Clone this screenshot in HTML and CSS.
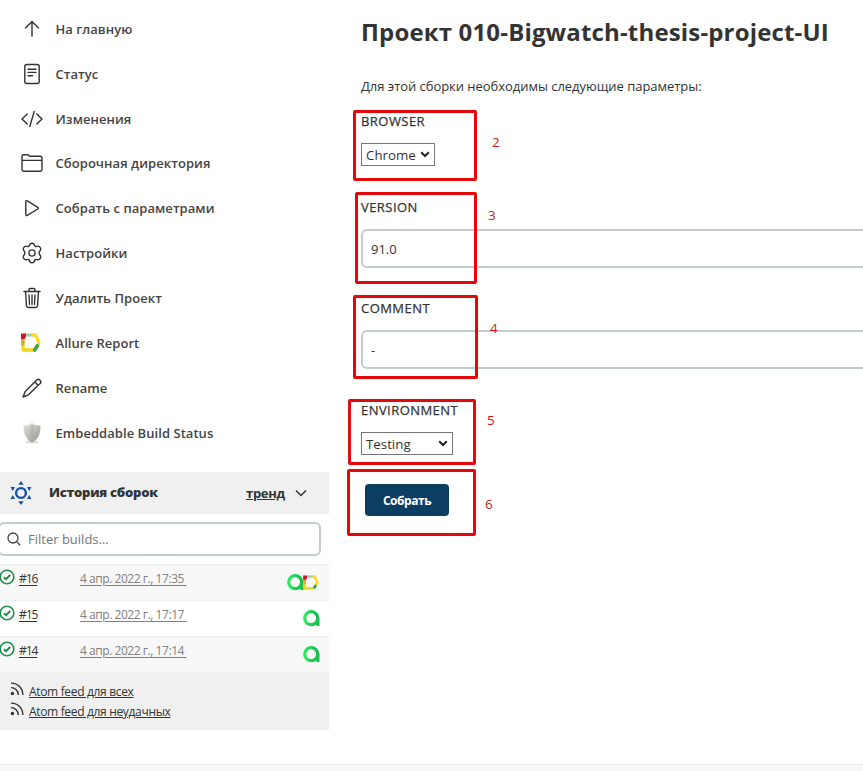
FILE: index.html
```html
<!DOCTYPE html>
<html lang="ru">
<head>
<meta charset="utf-8">
<title>010-Bigwatch-thesis-project-UI</title>
<link rel="stylesheet" href="styles.css">
</head>
<body>
<svg class="defs" width="0" height="0" aria-hidden="true">
  <defs>
    <linearGradient id="green" x1="0" y1="0" x2="1" y2="0"><stop offset="0" stop-color="#2fe860"/><stop offset="1" stop-color="#14b84a"/></linearGradient>
    <linearGradient id="silver" x1="0" y1="0" x2="1" y2="1"><stop offset="0" stop-color="#e4e4e0"/><stop offset="1" stop-color="#92928e"/></linearGradient>
    <symbol id="allure" viewBox="0 0 20 19">
      <path d="M2 5v12h11" fill="none" stroke="#f0d71c" stroke-width="3.400"/>
      <path d="M1.800 6v5" stroke="#d9a52c" stroke-width="3.200"/>
      <path d="M5 2h8" stroke="#a4cda4" stroke-width="2.800"/>
      <path d="M12 2H14.500l3.500 7.500-1.800 3.500" fill="none" stroke="#ffd91f" stroke-width="3.200"/>
      <path d="M16.300 12.800L13.700 17" stroke="#3ca64a" stroke-width="3.600"/>
      <path d="M0 .5h5v3L3.800 6H0z" fill="#d0142c"/>
    </symbol>
    <symbol id="testops" viewBox="0 0 17 17">
      <circle cx="8.200" cy="8.200" r="6.500" fill="none" stroke="url(#green)" stroke-width="3.200"/>
      <path d="M13.200 8H16.500V16H13.700L12.300 13z" fill="#19c44d"/>
    </symbol>
    <symbol id="ok" viewBox="0 0 16 16">
      <circle cx="8" cy="8" r="6.800" fill="#fff" stroke="#1e9048" stroke-width="1.600"/>
      <path d="M4.900 8.200l2.200 2 4-4.200" fill="none" stroke="#1e8a42" stroke-width="1.900"/>
    </symbol>
    <symbol id="feed" viewBox="0 0 14 14">
      <circle cx="2.400" cy="11.500" r="1.700" fill="#333"/>
      <path d="M1 5.600a7.200 7.200 0 0 1 7.300 7.400M1 1.100C8 1 12.800 6 12.900 13" fill="none" stroke="#333" stroke-width="1.400"/>
    </symbol>
    <symbol id="chev" viewBox="0 0 10 7"><path d="M1.200 1.300L5 5l3.800-3.700" fill="none" stroke="#222" stroke-width="2"/></symbol>
  </defs>
</svg>
<div class="page">
  <aside class="side">
    <nav class="tasks">
      <a class="task"><svg class="icon" viewBox="0 0 24 24"><path d="M12 19V4.500M5.500 11L12 4.500l6.500 6.500"/></svg><span>На главную</span></a>
      <a class="task"><svg class="icon" viewBox="0 0 24 24"><rect x="4.800" y="2.500" width="14.400" height="19" rx="2"/><path d="M8 7.200h8M8 10.400h8M8 13.700h4.500"/></svg><span>Статус</span></a>
      <a class="task"><svg class="icon" viewBox="0 0 24 24"><path d="M7.200 7L2 12l5.200 5M16.800 7L22 12l-5.200 5M14.200 4.500l-4.400 15"/></svg><span>Изменения</span></a>
      <a class="task"><svg class="icon" viewBox="0 0 24 24"><path d="M2 18.500V5.200Q2 3.800 3.500 3.800H8L10.200 5.300H20.300Q22 5.300 22 7v11.500q0 1.700-1.700 1.700H3.700Q2 20.200 2 18.500zM2 9.400h20"/></svg><span>Сборочная директория</span></a>
      <a class="task"><svg class="icon" viewBox="0 0 24 24"><path d="M5.800 5.800v12.700q0 1.700 1.500.9L17.800 13q1.200-.9 0-1.700L7.300 4.900q-1.500-.8-1.500.9z"/></svg><span>Собрать с параметрами</span></a>
      <a class="task"><svg class="icon" viewBox="0 0 24 24"><circle cx="12" cy="12" r="3.100"/><path d="M9.300 4.700C9.900 1.500 14.100 1.500 14.700 4.700Q15.300 5.900 16.800 5.400C19.900 4.300 22 7.900 19.700 10.200Q18.500 12 19.700 13.800C22 16.100 19.900 19.700 16.800 18.600Q15.300 18.100 14.700 19.300C14.100 22.500 9.900 22.500 9.300 19.300Q8.700 18.100 7.200 18.600C4.100 19.700 2 16.100 4.300 13.800Q5.500 12 4.300 10.200C2 7.900 4.100 4.300 7.200 5.400Q8.700 5.900 9.300 4.700z"/></svg><span>Настройки</span></a>
      <a class="task"><svg class="icon" viewBox="0 0 24 24"><path d="M4 5.500h16M5.500 5.500l1 14.200q.1 1.800 1.800 1.800h7.400q1.700 0 1.800-1.800l1-14.200M9 5V3.600Q9 2.500 10.200 2.500h3.600q1.200 0 1.200 1.100V5M9 9l.5 9.200M12 9v9.200M15 9l-.5 9.200"/></svg><span>Удалить Проект</span></a>
      <a class="task"><svg class="icon logo"><use href="#allure"/></svg><span>Allure Report</span></a>
      <a class="task"><svg class="icon" viewBox="0 0 24 24"><path d="M14.700 6.100L5.200 15.500 3 21l5.500-2.200 9.600-9.500M14.700 6.100l2-2.100q1.700-1.400 3.300.2 1.700 1.600.2 3.300l-2.100 1.800z"/></svg><span>Rename</span></a>
      <a class="task"><svg class="icon shield" viewBox="0 0 24 24"><ellipse cx="12" cy="21" rx="7" ry="1.500"/><path d="M3.500 4.500Q9 5 12 2q3 3 8.500 2.500.8 12-8.500 17.200Q2.700 16.500 3.500 4.500z"/><path class="seam" d="M12 5v11"/></svg><span>Embeddable Build Status</span></a>
    </nav>
    <section class="history">
      <header class="history-head">
        <svg class="sun" viewBox="0 0 22 24"><circle cx="11" cy="12" r="4.900"/><path d="M11 0l2.700 3.700H8.300zM11 24l2.700-3.700H8.300zM.6 5.800l4.600.5L2.500 10zM.6 18.200l4.600-.5L2.500 14zM21.400 5.800l-4.600.5L19.500 10zM21.400 18.200l-4.600-.5 2.700-3.700z"/></svg>
        <strong class="history-title">История сборок</strong>
        <a class="trend">тренд</a>
        <svg class="toggle" viewBox="0 0 12 8"><path d="M1 1.500l5 5 5-5"/></svg>
      </header>
      <label class="filter">
        <svg viewBox="0 0 14 14"><circle cx="6" cy="6" r="5"/><path d="M9.700 9.700l3.500 3.500"/></svg>
        <input placeholder="Filter builds...">
      </label>
      <div class="build odd"><svg class="ok"><use href="#ok"/></svg><a class="num">#16</a><a class="date">4 апр. 2022 г., 17:35&nbsp;</a><span class="badges"><svg class="ops"><use href="#testops"/></svg><svg class="mini"><use href="#allure"/></svg></span></div>
      <div class="build"><svg class="ok"><use href="#ok"/></svg><a class="num">#15</a><a class="date">4 апр. 2022 г., 17:17&nbsp;</a><span class="badges"><svg class="ops"><use href="#testops"/></svg></span></div>
      <div class="build odd"><svg class="ok"><use href="#ok"/></svg><a class="num">#14</a><a class="date">4 апр. 2022 г., 17:14&nbsp;</a><span class="badges"><svg class="ops"><use href="#testops"/></svg></span></div>
      <footer class="feeds">
        <div class="feed"><svg><use href="#feed"/></svg><a>Atom feed для всех</a></div>
        <div class="feed"><svg><use href="#feed"/></svg><a>Atom feed для неудачных</a></div>
      </footer>
    </section>
  </aside>
  <main class="main">
    <h1>Проект 010-Bigwatch-thesis-project-UI</h1>
    <p class="intro">Для этой сборки необходимы следующие параметры:</p>
    <form>
      <div class="field browser"><label>BROWSER</label><div class="pick"><select><option>Chrome</option></select><svg><use href="#chev"/></svg></div></div>
      <div class="field version"><label>VERSION</label><input value="91.0"></div>
      <div class="field comment"><label>COMMENT</label><input value="-"></div>
      <div class="field environment"><label>ENVIRONMENT</label><div class="pick"><select><option>Testing</option></select><svg><use href="#chev"/></svg></div></div>
      <button type="button">Собрать</button>
    </form>
  </main>
</div>
<div class="bottom"></div>
<div class="mark m2"><span>2</span></div>
<div class="mark m3"><span>3</span></div>
<div class="mark m4"><span>4</span></div>
<div class="mark m5"><span>5</span></div>
<div class="mark m6"><span>6</span></div>
</body>
</html>
```
FILE: styles.css
```css
* { box-sizing: border-box; }
body { margin: 0; height: 771px; overflow: hidden; position: relative; background: #fff; color: #333; font: 13px/20px "Open Sans", "Noto Sans", sans-serif; }
.defs { position: absolute; }
svg { display: block; flex: none; }
.page { display: flex; height: 764px; }
.side { width: 329px; flex: none; }
.tasks { padding-top: 6.500px; height: 472px; }
.task { display: flex; align-items: center; height: 44.85px; padding-left: 20px; gap: 11.500px; font-weight: 600; font-size: 13px; letter-spacing: .05px; color: #444; }
.icon { width: 24px; height: 24px; fill: none; stroke: #333; stroke-width: 1.400; stroke-linecap: round; stroke-linejoin: round; }
.logo { width: 20px; height: 19px; stroke: none; }
.task .logo { margin: 0 3px 0 1px; }
.shield { stroke: none; fill: url(#silver); }
.shield ellipse { fill: #ddd; }
.shield .seam { stroke: #aaa; stroke-width: 1; }
.history-head { display: flex; align-items: center; height: 42px; background: #f0f0f0; padding-left: 10px; font-weight: 700; }
.sun { width: 22px; height: 24px; fill: #1350a8; }
.sun circle { fill: none; stroke: #1350a8; stroke-width: 2.400; }
.history-title { margin: -2px 0 0 17px; width: 197px; font-size: 13px; letter-spacing: -.25px; }
.trend { width: 40px; text-decoration: underline; letter-spacing: -.3px; }
.toggle { width: 12px; height: 8px; margin-left: 9px; fill: none; stroke: #333; stroke-width: 1.500; }
.filter { display: flex; align-items: center; width: 323px; height: 34px; margin: 8px 0 8px -2px; border: 2px solid #c3ccd1; border-radius: 6px; padding-left: 7px; gap: 7px; }
.filter svg { width: 14px; height: 14px; fill: none; stroke: #444; stroke-width: 1.300; }
.filter input { border: 0; padding: 0; width: 250px; background: none; font: 13px "Open Sans", sans-serif; }
.filter input::placeholder { color: #777; }
.build { display: flex; height: 36px; padding-top: 4px; border-top: 1px solid #f0f0f0; font-size: 12px; }
.odd { background: #f8f8f8; }
.ok { width: 16px; height: 16px; margin: 0 4px 0 -1px; }
.num, .date { text-decoration: underline; line-height: 19px; text-underline-offset: 2px; }
.num { margin-right: auto; letter-spacing: -1.100px; }
.num { flex: none; }
.date { color: #808080; letter-spacing: -.45px; position: static; }
.build { display: grid; grid-template-columns: 19px 61px 1fr auto; justify-items: start; align-items: start; }
.badges { display: flex; margin: 5px 9px 0 0; }
.ops { width: 17px; height: 17px; }
.mini { width: 16px; height: 15px; margin: 1px 1px 0 -1px; }
.feeds { height: 58px; background: #f0f0f0; padding: 10px 0 0 10px; }
.feed { display: flex; gap: 5px; height: 20px; font-size: 12px; letter-spacing: -.33px; text-decoration: underline; }
.feed svg { width: 14px; height: 14px; }
.main { flex: 1; min-width: 0; padding-left: 32px; overflow: hidden; }
h1 { margin: 14px 0 0; height: 36px; font-size: 24px; line-height: 36px; letter-spacing: .16px; font-weight: 700; white-space: nowrap; }
.intro { margin: 26px 0 15px; font-size: 13px; letter-spacing: -.04px; white-space: nowrap; }
.field { width: 600px; }
.field label { display: block; height: 20px; letter-spacing: .45px; -webkit-text-stroke: .25px #333; }
.browser { height: 86px; }
.version { height: 101px; }
.comment { height: 102px; }
.environment { height: 84px; }
.field input { display: block; width: 600px; height: 39px; margin-top: 12px; border: 2px solid #c3ccd1; border-radius: 6px; padding: 0 8px; font: 13px "Open Sans", sans-serif; color: #333; }
.pick { position: relative; width: 74px; height: 23px; margin-top: 12px; }
.environment .pick { width: 92px; }
.pick select { appearance: none; display: block; width: 100%; height: 23px; padding: 0 4px; background: #fff; border: 1px solid #767676; border-radius: 0; font: 13.300px "Open Sans", sans-serif; color: #333; }
.pick svg { position: absolute; right: 5px; top: 8px; width: 10px; height: 7px; }
button { display: block; width: 84px; height: 32px; margin-left: 4px; padding: 0; border: 0; border-radius: 4px; background: #0b3e60; color: #fff; font: 700 12px "Open Sans", sans-serif; letter-spacing: -.45px; }
.bottom { height: 7px; background: #f8f8f8; border-top: 1px solid #ececec; }
.mark { position: absolute; border: 3px solid #e4080b; border-radius: 2px; }
.mark span { position: absolute; color: #c81a1e; font: 13.500px/16px "Open Sans", sans-serif; }
.m2 { left: 353px; top: 110px; width: 124px; height: 71px; }
.m2 span { left: 136px; top: 21px; }
.m3 { left: 355px; top: 192px; width: 122px; height: 92px; }
.m3 span { left: 130px; top: 12px; }
.m4 { left: 353px; top: 295px; width: 125px; height: 84px; }
.m4 span { left: 134px; top: 22px; }
.m5 { left: 348px; top: 399px; width: 128px; height: 66px; }
.m5 span { left: 136px; top: 10px; }
.m6 { left: 347px; top: 469px; width: 129px; height: 67px; }
.m6 span { left: 135px; top: 24px; }
```
